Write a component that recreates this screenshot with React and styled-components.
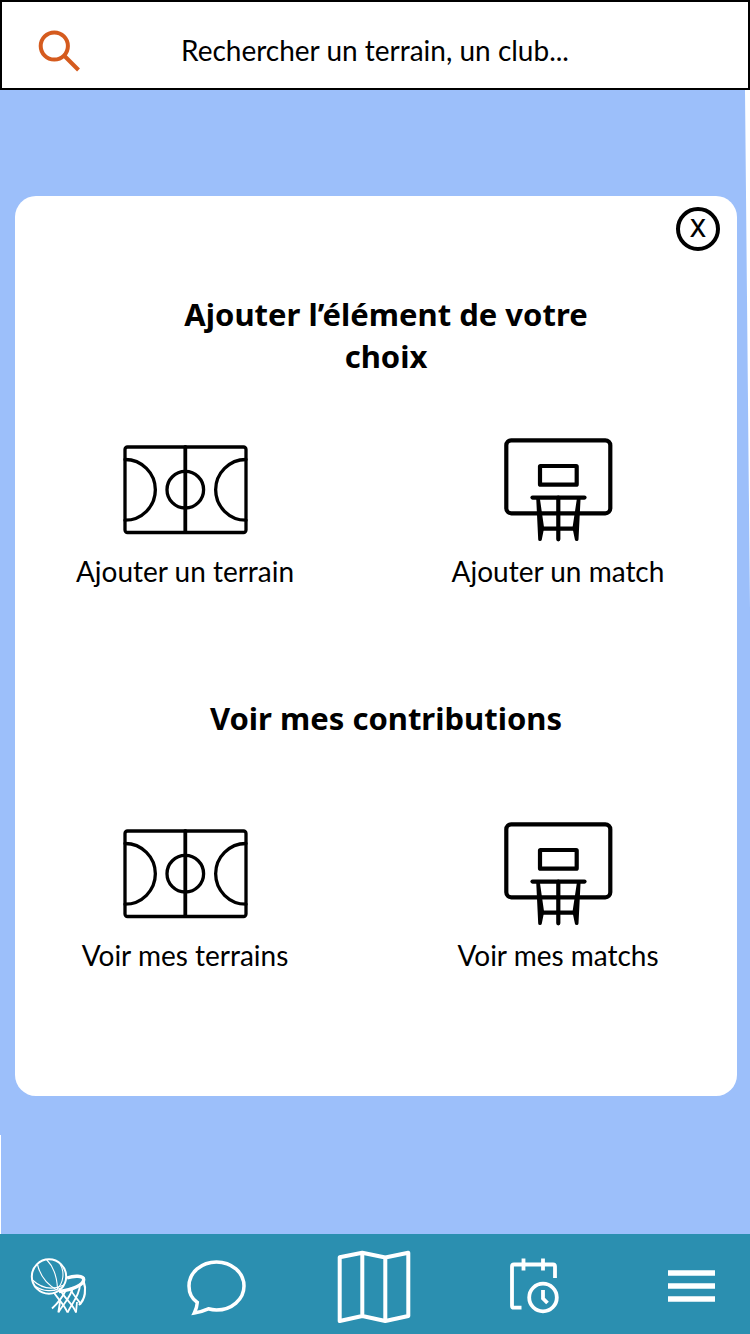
import React from "react";
import styled, { createGlobalStyle } from "styled-components";

const GlobalStyle = createGlobalStyle`
  *, *::before, *::after { box-sizing: border-box; }
  body {
    margin: 0;
    background: #ffffff;
    color: #000000;
    font-family: Lato, "Liberation Sans", sans-serif;
  }
`;

const Page = styled.div`
  display: flex;
  flex-direction: column;
  min-height: 100vh;
`;

const SearchBar = styled.label`
  display: grid;
  grid-template-columns: 80px 1fr 80px;
  align-items: center;
  height: 90px;
  padding-top: 10px;
  border: 2px solid #000000;
  background: #ffffff;
`;

const SearchIcon = styled.svg`
  width: 44px;
  height: 44px;
  margin-left: 35px;
  fill: none;
  stroke: #d55b1e;
  stroke-width: 4;
`;

const SearchInput = styled.input`
  width: 100%;
  padding: 0;
  border: 0;
  outline: 0;
  background: transparent;
  font: 400 28px/40px Lato, "Liberation Sans", sans-serif;
  text-align: center;
  color: #000000;
  &::placeholder { color: #000000; opacity: 1; }
`;

const Backdrop = styled.main`
  flex: 1;
  padding: 106px 13px 138px 15px;
  background: #9cbffa;
  clip-path: polygon(0 0, calc(100% - 5px) 0, 100% 520px, 100% 100%, 1px 100%, 1px 1045px, 0 1045px);
`;

const Dialog = styled.section`
  display: flex;
  flex-direction: column;
  padding: 11px 17px 120px;
  border-radius: 21px;
  background: #ffffff;
`;

const CloseButton = styled.button`
  display: flex;
  align-items: center;
  justify-content: center;
  align-self: flex-end;
  width: 44px;
  height: 44px;
  padding: 0;
  border: 4px solid #000000;
  border-radius: 50%;
  background: transparent;
  color: #000000;
  font: 500 24px/36px Inter, sans-serif;
  cursor: pointer;
`;

const Heading = styled.h2`
  margin: ${(p) => p.$before}px 110px 0 130px;
  font: 700 31px/42px "Noto Sans", sans-serif;
  text-align: center;
`;

const Choices = styled.div`
  display: grid;
  grid-template-columns: 1fr 1fr;
  column-gap: 133px;
  margin-top: ${(p) => p.$before}px;
  padding: 0 42px 3px 33px;
`;

const Choice = styled.button`
  display: flex;
  flex-direction: column;
  align-items: center;
  gap: 11px;
  padding: 0;
  border: 0;
  background: transparent;
  color: #000000;
  font: 400 28px/36px Lato, "Liberation Sans", sans-serif;
  white-space: nowrap;
  cursor: pointer;
`;

const Drawing = styled.svg`
  width: 128px;
  height: 104px;
  fill: none;
  stroke: #000000;
  stroke-width: ${(p) => p.$line}px;
  stroke-linecap: round;
  stroke-linejoin: round;
`;

const NavBar = styled.nav`
  display: flex;
  align-items: center;
  justify-content: space-between;
  height: 100px;
  padding: 4px 19px 0 18px;
  background: #2b8fb0;
`;

const NavLink = styled.a`
  display: flex;
  width: 80px;
  height: 80px;
`;

const NavIcon = styled.svg`
  width: 80px;
  height: 80px;
  fill: none;
  stroke: #ffffff;
  stroke-width: ${(p) => p.$line}px;
`;

const Court = () => (
  <Drawing $line={3.3} viewBox="121 438 128 104" aria-hidden="true">
    <rect x="125" y="447" width="121" height="85.5" rx="2.5" />
    <path d="M185.3 447V532" strokeWidth="3.8" />
    <circle cx="185.3" cy="489.7" r="18.3" />
    <path d="M125 459.5A30.3 30.3 0 0 1 125 520.2M246 459.5A30.3 30.3 0 0 0 246 520.2" />
  </Drawing>
);

const Hoop = () => (
  <Drawing $line={4.2} viewBox="494 438 128 104" aria-hidden="true">
    <rect x="506.3" y="440.3" width="104" height="73" rx="5" />
    <rect x="540" y="466" width="36.7" height="18.7" rx="0.5" />
    <path d="M532.5 497.6H584.5" />
    <path d="M558.3 497.5V539.3M541 528.7H576" />
    <path d="M538 498L540 539.3L542.3 528ZM578.8 498L576.7 539.3L574.3 528Z" fill="#000000" strokeWidth="3.6" />
  </Drawing>
);

const ChoiceList = ({ before, first, second }) => (
  <Choices $before={before}>
    <Choice type="button"><Court />{first}</Choice>
    <Choice type="button"><Hoop />{second}</Choice>
  </Choices>
);

export default function App() {
  return (
    <Page>
      <GlobalStyle />
      <SearchBar>
        <SearchIcon viewBox="37 28 44 44" aria-hidden="true">
          <circle cx="54.3" cy="46" r="13.6" />
          <path d="M64 55.5L78.5 70" />
        </SearchIcon>
        <SearchInput
          type="text"
          aria-label="Rechercher"
          placeholder="Rechercher un terrain, un club..."
        />
      </SearchBar>

      <Backdrop>
        <Dialog role="dialog" aria-label="Ajouter ou voir">
          <CloseButton type="button" aria-label="Fermer">X</CloseButton>
          <Heading $before={42}>Ajouter l’élément de votre choix</Heading>
          <ChoiceList before={61} first="Ajouter un terrain" second="Ajouter un match" />
          <Heading $before={105}>Voir mes contributions</Heading>
          <ChoiceList before={83} first="Voir mes terrains" second="Voir mes matchs" />
        </Dialog>
      </Backdrop>

      <NavBar aria-label="Navigation">
        <NavLink href="#accueil" aria-label="Accueil">
          <NavIcon $line={1.8} viewBox="18 1246 80 80">
            <circle cx="49" cy="1276.5" r="17.2" strokeWidth="2" />
            <g strokeWidth="1.1">
              <path d="M37.5 1264.5C40 1275 46 1284 57 1290" />
              <path d="M46.5 1259.5C53 1266 57 1277 57.5 1289" />
              <path d="M60 1264C65 1272 63.5 1283 57 1289" />
              <path d="M32.5 1280C41 1288 52 1290.5 64 1285" />
              <path d="M35.5 1286.5C43 1291.5 53 1292 61 1288" />
            </g>
            <path d="M67 1278C74 1275.5 83.5 1275.5 83.7 1279.5C84 1284.500 73 1290 59 1291.500" strokeWidth="3.400" />
            <path d="M83.500 1281C86.500 1289 85.500 1299 79 1305" strokeWidth="2.200" />
            <path d="M54 1292.500C57 1298 64 1304 67.500 1312.500M61 1291C65 1299 73 1304 76 1312.500M70 1288C73 1296 78 1299 81 1304.500" />
            <path d="M66 1290C62 1298 57 1304 52 1308.500M73 1287C71 1297 64 1303 58.300 1312.500M80 1284C80 1295 72 1303 67.500 1312.500M77 1302L76 1312.500M60 1302L58.300 1312.500" />
          </NavIcon>
        </NavLink>
        <NavLink href="#messages" aria-label="Messages">
          <NavIcon $line={3.5} viewBox="176 1246 80 80">
            <path d="M197.3 1302.5C191.5 1298.5 189 1292.5 189 1286C189 1272.5 201.5 1262 216.5 1262C231.5 1262 244 1272.5 244 1286C244 1299.5 231.5 1310 216.5 1310C213.5 1310 211 1309.6 208.3 1308.8Q201 1312 194.3 1313Q197 1307.5 197.3 1302.5Z" />
          </NavIcon>
        </NavLink>
        <NavLink href="#carte" aria-label="Carte">
          <NavIcon $line={4} viewBox="335 1246 80 80">
            <path strokeLinejoin="round" d="M339.7 1257.3L362.3 1252.8L385.3 1257.5L408.3 1252.8V1316L385.3 1321L362.3 1316L339.7 1321ZM362.3 1253V1316M385.3 1258V1321" />
          </NavIcon>
        </NavLink>
        <NavLink href="#agenda" aria-label="Agenda">
          <NavIcon $line={3.8} viewBox="493 1246 80 80">
            <path d="M521.5 1307.7H514Q512 1307.7 512 1305.7V1266.5Q512 1264.5 514 1264.5H553Q555 1264.5 555 1266.5V1278M523.5 1258.5V1270.5M543 1258.5V1270.5" />
            <circle cx="543" cy="1297.5" r="13.8" />
            <path d="M543 1290V1298.5L547.5 1303" />
          </NavIcon>
        </NavLink>
        <NavLink href="#menu" aria-label="Menu">
          <NavIcon $line={5.4} viewBox="651 1246 80 80">
            <path d="M668 1273H715M668 1286H715M668 1299H715" />
          </NavIcon>
        </NavLink>
      </NavBar>
    </Page>
  );
}
